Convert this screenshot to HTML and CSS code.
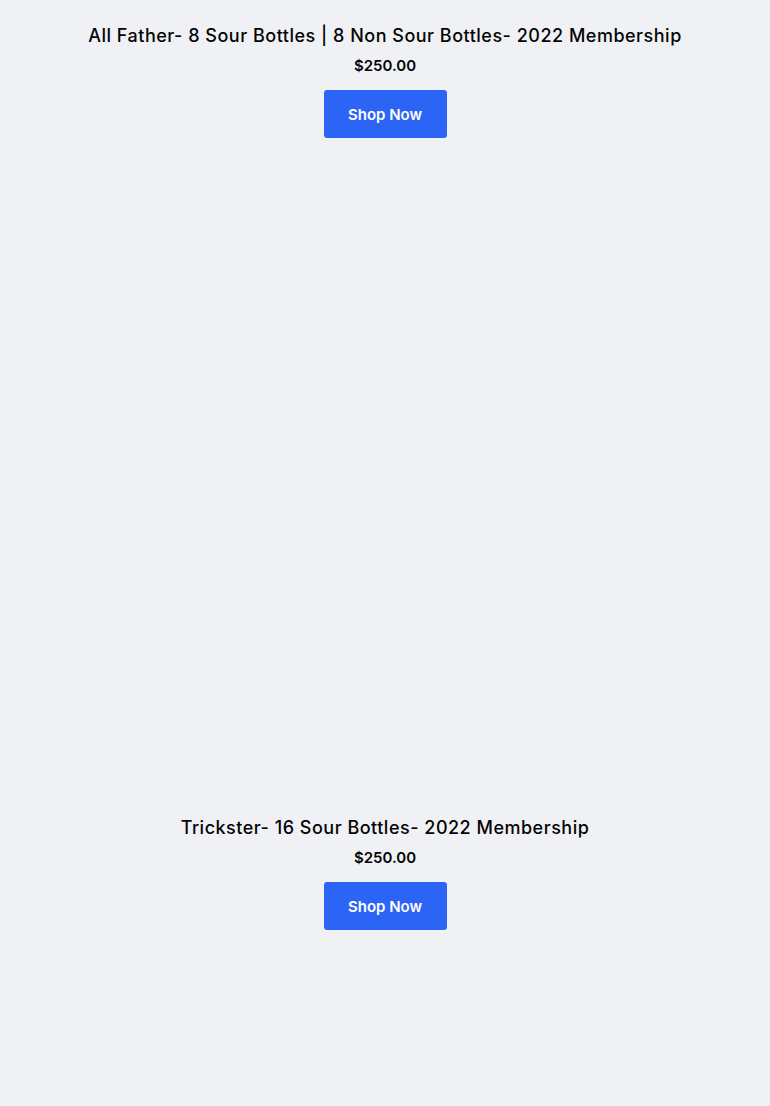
FILE: index.html
```html
<!DOCTYPE html>
<html>
<head>
<meta charset="utf-8">
<link rel="stylesheet" href="styles.css">
</head>
<body>
<main class="list">
  <section class="card">
    <h2 class="title">All Father- 8 Sour Bottles | 8 Non Sour Bottles- 2022 Membership</h2>
    <p class="price">$250.00</p>
    <a class="btn" href="#">Shop Now</a>
  </section>
  <div class="media"></div>
  <section class="card">
    <h2 class="title">Trickster- 16 Sour Bottles- 2022 Membership</h2>
    <p class="price">$250.00</p>
    <a class="btn" href="#">Shop Now</a>
  </section>
</main>
</body>
</html>
```

FILE: styles.css
```css
html, body {
  margin: 0;
  padding: 0;
  background: #f0f1f5;
}
body {
  font-family: Inter, "Noto Sans", sans-serif;
  color: #050505;
  height: 1106px;
}
.list {
  padding-top: 24px;
  display: flex;
  flex-direction: column;
}
.card {
  width: 100%;
  display: flex;
  flex-direction: column;
  align-items: center;
}
.title {
  margin: 0;
  font-size: 18px;
  line-height: 24px;
  font-weight: 500;
  letter-spacing: 0.5px;
  text-align: center;
}
.price {
  margin: 8px 0 0;
  font-size: 15px;
  line-height: 20px;
  font-weight: 600;
}
.btn {
  margin-top: 14px;
  width: 123px;
  height: 48px;
  box-sizing: border-box;
  display: flex;
  align-items: center;
  justify-content: center;
  background: #2c64f6;
  color: #fff;
  border-radius: 3px;
  font-size: 15px;
  font-weight: 600;
  text-decoration: none;
}
.media {
  height: 678px;
}
```
